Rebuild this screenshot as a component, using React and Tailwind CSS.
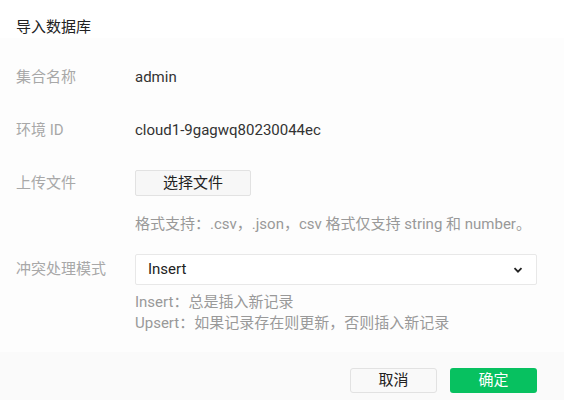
import React from 'react';

const font = { fontFamily: 'Roboto, "Noto Sans CJK SC", sans-serif' };

const Row = ({ label, children, className = '' }) => (
  <div className={`flex items-center ${className}`}>
    <div className="w-[119px] shrink-0 text-[#a8a8a8]">{label}</div>
    <div className="flex-1 min-w-0">{children}</div>
  </div>
);

const App = () => {
  return (
    <div className="w-[564px] h-[400px] flex flex-col bg-[#fdfdfd] text-[15px]" style={font}>
      {/* Header */}
      <div className="h-[38px] bg-white flex items-end pl-4">
        <span className="text-[#222]">导入数据库</span>
      </div>

      {/* Body */}
      <div className="flex-1 pl-4 pr-[27px] pt-[26px]">
        <Row label="集合名称" className="h-[26px]">
          <span className="text-[#333]">admin</span>
        </Row>
        <Row label="环境 ID" className="h-[26px] mt-[27px]">
          <span className="text-[#333]">cloud1-9gagwq80230044ec</span>
        </Row>
        <Row label="上传文件" className="h-[26px] mt-[27px]">
          <button className="w-[116px] h-[26px] border border-[#e2e2e2] rounded-[2px] bg-[#f7f7f7] text-[#222] flex items-center justify-center">
            选择文件
          </button>
        </Row>
        <div className="pl-[119px] mt-[18px] text-[#999] leading-[20px] whitespace-nowrap">
          格式支持：.csv，.json，csv 格式仅支持 string 和 number。
        </div>
        <Row label="冲突处理模式" className="mt-[20px]">
          <div className="h-[31px] border border-[#e8e8e8] rounded-[2px] bg-white flex items-center justify-between pl-3 pr-[13px]">
            <span className="text-[#222]">Insert</span>
            <svg width="10" height="10" viewBox="0 0 10 10" className="text-[#222]">
              <path d="M1.5 3.2 L5 6.7 L8.5 3.2" fill="none" stroke="currentColor" strokeWidth="1.8" />
            </svg>
          </div>
        </Row>
        <div className="pl-[119px] mt-[7px] text-[#999] leading-[21px]">
          <div>Insert：总是插入新记录</div>
          <div>Upsert：如果记录存在则更新，否则插入新记录</div>
        </div>
      </div>

      {/* Footer */}
      <div className="h-[48px] bg-[#fafafa] flex items-start justify-end gap-[13px] pr-[27px] pt-[16px]">
        <button className="w-[87px] h-[25px] border border-[#e2e2e2] rounded-[3px] bg-[#f9f9f9] text-[#222] flex items-center justify-center">
          取消
        </button>
        <button className="w-[87px] h-[25px] rounded-[3px] bg-[#07c160] text-white flex items-center justify-center">
          确定
        </button>
      </div>
    </div>
  );
};

export default App;
